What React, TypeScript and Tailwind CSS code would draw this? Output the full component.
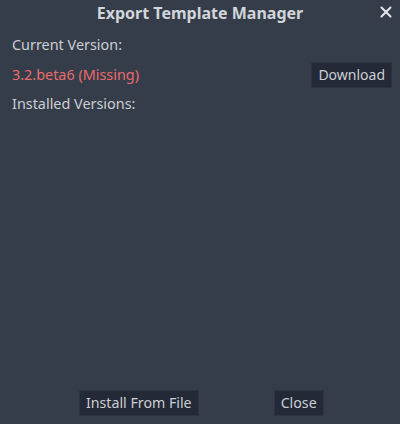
export default function App() {
    return (
        <div
            className="w-[400px] h-[424px] bg-[#363d4a] text-[#cbced4] flex flex-col overflow-hidden"
            style={{ fontFamily: '"Noto Sans", "Open Sans", sans-serif' }}
        >
            {/* Title bar */}
            <div className="relative h-[26px] flex items-center justify-center">
                <span className="text-[16px] leading-[26px] font-bold text-[#d2d5da]">Export Template Manager</span>
                <button className="absolute right-[8px] top-[6px] w-[12px] h-[12px] flex items-center justify-center">
                    <svg width="12" height="12" viewBox="0 0 12 12">
                        <path d="M1.5 1.5 L10.5 10.5 M10.5 1.5 L1.5 10.5" stroke="#e6e8eb" strokeWidth="2" strokeLinecap="round" />
                    </svg>
                </button>
            </div>

            {/* Content */}
            <div className="flex-1 flex flex-col px-[12px] pt-[9px] text-[14.4px]">
                <div className="h-[20px] leading-[20px]">Current Version:</div>
                <div className="mt-[7px] h-[26px] flex items-center justify-between">
                    <span className="leading-[20px] text-[#e96b6b]">3.2.beta6 (Missing)</span>
                    <button className="h-[26px] px-[6px] text-[14px] leading-[24px] bg-[#232936] border border-[#2c3341] -mr-[4px]">
                        Download
                    </button>
                </div>
                <div className="mt-[6px] h-[20px] leading-[20px]">Installed Versions:</div>
            </div>

            {/* Footer */}
            <div className="flex items-center pl-[79px] gap-[75px] mb-[8px] text-[14.2px]">
                <button className="h-[26px] px-[6px] leading-[24px] bg-[#232936] border border-[#2c3341]">
                    Install From File
                </button>
                <button className="h-[26px] px-[6px] leading-[24px] bg-[#232936] border border-[#2c3341]">
                    Close
                </button>
            </div>
        </div>
    );
}
